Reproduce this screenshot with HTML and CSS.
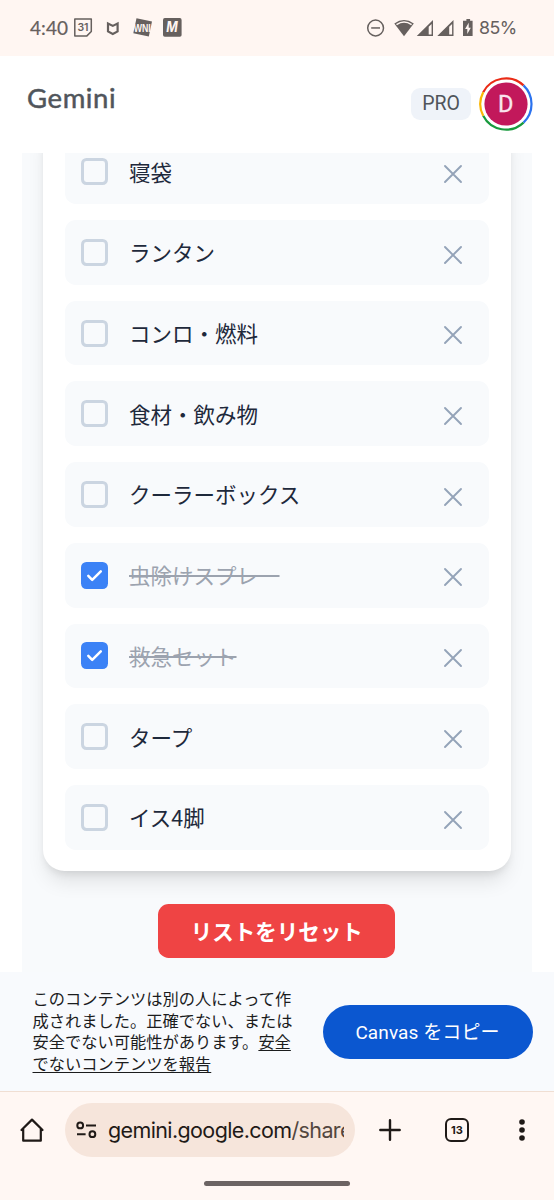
FILE: index.html
```
<!DOCTYPE html>
<html lang="ja">
<head>
<meta charset="utf-8">
<meta name="viewport" content="width=device-width">
<title>Gemini</title>
<link rel="stylesheet" href="styles.css">
</head>
<body>
<div class="status">
  <span class="clock">4:40</span>
  <svg class="status-left" width="112" height="24" viewBox="0 0 112 24" fill="#66605e">
    <path d="M1.8 1.9h16.5v12.6l-4.4 4.4H1.8z" fill="none" stroke="#66605e" stroke-width="1.5" stroke-linejoin="round"/>
    <text x="10" y="14.3" class="cal" text-anchor="middle">31</text>
    <path d="M35 6.6v7.8l4.8 2.5 4.8-2.5V6.6l-4.8 2.3z" fill="none" stroke="#66605e" stroke-width="2.2"/>
    <path d="M63.5 1.2 79 4.6 75.8 19.6 60.3 16.2z"/>
    <text x="69.3" y="15" class="news" text-anchor="middle" textLength="17" lengthAdjust="spacingAndGlyphs">WNI</text>
    <rect x="90" y="1.1" width="18.6" height="18.6" rx="1.8"/>
    <text x="99" y="15" class="mark" text-anchor="middle" textLength="11.5" lengthAdjust="spacingAndGlyphs">M</text>
  </svg>
  <svg class="status-right" width="110" height="24" viewBox="0 0 110 24" fill="#66605e">
    <circle cx="9.6" cy="12" r="7.9" fill="none" stroke="#66605e" stroke-width="1.5"/>
    <path d="M5.2 11.2h8.8v1.5H5.2z"/>
    <path d="M28.3 7.4Q38 0.5 47.8 7.4L38 20.2z"/>
    <path d="M30.5 8.6Q38 3.4 45.6 8.6" fill="none" stroke="#fff6f2" stroke-width="1.5"/>
    <path d="M50.8 20 67 4v16zM71.3 20 87.5 4v16z"/>
    <path d="M62.7 10.8 65.6 8v10.6h-2.9zM83.2 10.8 86.1 8v10.6h-2.9z" fill="#fff6f2"/>
    <path d="M98 4.7h2.4V3h3.7v1.7h2.5v15.4H97V4.7z"/>
    <path d="m102.7 6.8-3.6 6.2h2.2v5l3.5-6.3h-2.1z" fill="#fff6f2"/>
  </svg>
  <span class="battery">85%</span>
</div>

<header class="header">
  <span class="brand">Gemini</span>
  <span class="plan">PRO</span>
  <svg class="avatar" width="54" height="54" viewBox="0 0 54 54" fill="none" stroke-width="2.2">
    <path d="M4.2 15.2A25.6 25.6 0 0 1 44.5 8.4" stroke="#ea2b16"/>
    <path d="M44.5 8.4A25.6 25.6 0 0 1 44.5 45.6" stroke="#2b72ee"/>
    <path d="M44.5 45.6A25.6 25.6 0 0 1 4.2 38.8" stroke="#189a3d"/>
    <path d="M4.2 38.8A25.6 25.6 0 0 1 4.2 15.2" stroke="#fbb605"/>
    <circle cx="27" cy="27" r="21.6" fill="#c2185b"/>
    <text x="26.7" y="35.4" text-anchor="middle" class="initial">D</text>
  </svg>
</header>

<main class="canvas">
  <ul class="card">
    <li class="item"><i class="box"></i><span>寝袋</span><svg class="x" viewBox="0 0 20 20"><path d="m2 2 16 16M18 2 2 18"/></svg></li>
    <li class="item"><i class="box"></i><span>ランタン</span><svg class="x" viewBox="0 0 20 20"><path d="m2 2 16 16M18 2 2 18"/></svg></li>
    <li class="item"><i class="box"></i><span>コンロ・燃料</span><svg class="x" viewBox="0 0 20 20"><path d="m2 2 16 16M18 2 2 18"/></svg></li>
    <li class="item"><i class="box"></i><span>食材・飲み物</span><svg class="x" viewBox="0 0 20 20"><path d="m2 2 16 16M18 2 2 18"/></svg></li>
    <li class="item"><i class="box"></i><span>クーラーボックス</span><svg class="x" viewBox="0 0 20 20"><path d="m2 2 16 16M18 2 2 18"/></svg></li>
    <li class="item done"><i class="box"><svg viewBox="0 0 27 27"><path d="m7.3 13.8 3.9 4.1 8.6-8.6"/></svg></i><span>虫除けスプレー</span><svg class="x" viewBox="0 0 20 20"><path d="m2 2 16 16M18 2 2 18"/></svg></li>
    <li class="item done"><i class="box"><svg viewBox="0 0 27 27"><path d="m7.3 13.8 3.9 4.1 8.6-8.6"/></svg></i><span>救急セット</span><svg class="x" viewBox="0 0 20 20"><path d="m2 2 16 16M18 2 2 18"/></svg></li>
    <li class="item"><i class="box"></i><span>タープ</span><svg class="x" viewBox="0 0 20 20"><path d="m2 2 16 16M18 2 2 18"/></svg></li>
    <li class="item"><i class="box"></i><span>イス4脚</span><svg class="x" viewBox="0 0 20 20"><path d="m2 2 16 16M18 2 2 18"/></svg></li>
  </ul>
  <button class="reset">リストをリセット</button>
</main>

<section class="notice">
  <p>このコンテンツは別の人によって作<br>成されました。正確でない、または<br>安全でない可能性があります。<u>安全<br>でないコンテンツを報告</u></p>
  <button class="copy">Canvas をコピー</button>
</section>

<nav class="browser">
  <div class="tools">
    <svg class="home" width="26" height="26" viewBox="0 0 26 26"><path d="M2.5 13 13 2.6 23.5 13M4.2 11.5v12.2h17.6V11.5" fill="none" stroke="#1f1a17" stroke-width="2.2" stroke-linejoin="round" stroke-linecap="round"/></svg>
    <div class="address">
      <svg width="22" height="20" viewBox="0 0 22 20" fill="none" stroke="#1f1a17" stroke-width="2"><circle cx="4.2" cy="5.4" r="2.9"/><path d="M10 5.4h10M1 14.2h8.6"/><circle cx="16.4" cy="14.2" r="2.9"/></svg>
      <span class="url">gemini.google.com<span class="path">/share</span></span>
    </div>
    <svg class="plus" width="22" height="22" viewBox="0 0 22 22"><path d="M11 1.3v19.4M1.3 11h19.4" stroke="#1f1a17" stroke-width="2.4" stroke-linecap="round"/></svg>
    <span class="tabs">13</span>
    <svg class="more" width="6" height="22" viewBox="0 0 6 22" fill="#1f1a17"><circle cx="3" cy="3" r="2.8"/><circle cx="3" cy="11" r="2.8"/><circle cx="3" cy="19" r="2.8"/></svg>
  </div>
  <div class="handle"></div>
</nav>
</body>
</html>
```
FILE: styles.css
```
* { box-sizing: border-box; }
body {
  margin: 0;
  width: 554px;
  height: 1200px;
  overflow: hidden;
  display: flex;
  flex-direction: column;
  background: #fff;
  font-family: "Noto Sans", "Noto Sans CJK JP", sans-serif;
}
button { border: 0; padding: 0; color: #fff; white-space: nowrap; }

.status {
  height: 56px;
  flex: none;
  display: flex;
  align-items: center;
  padding-left: 30px;
  background: #fff6f2;
  color: #66605e;
  font: 19px/24px Lato, sans-serif;
}
.clock { width: 43px; letter-spacing: 0.1px; -webkit-text-stroke: 0.2px #66605e; }
.status-left { margin-top: 1px; }
.status-right { margin-left: 181px; margin-top: -1px; }
.battery { margin-left: 3px; font-family: Inter, sans-serif; font-size: 17.8px; letter-spacing: -0.5px; }
.cal { font: 600 10.5px Inter, sans-serif; }
.news { font: 700 10px "Liberation Sans", sans-serif; fill: #fff6f2; }
.mark { font: italic 700 14px Inter, sans-serif; fill: #fff6f2; }

.header { height: 97px; flex: none; display: flex; padding-left: 27px; color: #50555b; }
.brand { width: 384px; padding-top: 25px; font: 27.5px/34px Lato, sans-serif; letter-spacing: 0.6px; -webkit-text-stroke: 0.5px #50555b; }
.plan {
  width: 60px;
  height: 32px;
  margin-top: 32px;
  border-radius: 9px;
  background: #eff3f9;
  text-align: center;
  font: 400 19.5px/32px Roboto, sans-serif;
}
.avatar { margin: 21px 0 0 7.5px; }
.initial { font: 400 23.5px Roboto, sans-serif; fill: #f9e5ee; stroke: #f9e5ee; stroke-width: 0.3px; }

.canvas {
  height: 819px;
  flex: none;
  margin: 0 22px;
  padding: 0 21.5px 14.5px 21px;
  overflow: hidden;
  background: #f8fafc;
  display: flex;
  flex-direction: column;
  justify-content: flex-end;
  align-items: center;
}
.card {
  width: 100%;
  flex: none;
  margin: 0 0 32.5px;
  padding: 21.5px;
  list-style: none;
  display: grid;
  gap: 16.2px;
  border-radius: 21.5px;
  background: #fff;
  box-shadow: 0 13.5px 20px -4px rgb(0 0 0 / 10%), 0 5px 8px -3px rgb(0 0 0 / 10%);
}
.item {
  height: 64.55px;
  padding: 0 26.5px 0 16px;
  border-radius: 10.7px;
  background: #f8fafc;
  color: #1e293b;
  display: flex;
  align-items: center;
  font: 21.5px/32px "Noto Sans CJK JP", sans-serif;
}
.item span { margin-left: 21.5px; flex: 1; }
.box { width: 27px; height: 27px; border: 3px solid #cbd5e1; border-radius: 5.4px; }
.x { width: 20px; height: 20px; margin-top: 4.5px; fill: none; stroke: #94a3b8; stroke-width: 1.9; stroke-linecap: round; }
.done { color: #9ca3af; }
.done span { flex: none; text-decoration: line-through; text-decoration-thickness: 2px; }
.done .x { margin-left: auto; }
.done .box { border: 0; background: #3b82f6; }
.box svg { display: block; width: 27px; height: 27px; fill: none; stroke: #fff; stroke-width: 2.5; stroke-linecap: round; stroke-linejoin: round; }
.reset {
  width: 237px;
  height: 53.8px;
  flex: none;
  border-radius: 10.7px;
  background: #ef4444;
  font: 700 21.5px/54px "Noto Sans CJK JP", sans-serif;
}

.notice { height: 119px; flex: none; display: flex; padding-left: 32.5px; background: #f8fafd; }
.notice p {
  width: 290px;
  margin: 16px 0 0;
  color: #1b1c1d;
  font: 16.25px/21.5px "Noto Sans CJK JP", sans-serif;
  white-space: nowrap;
}
.notice u { text-underline-offset: 2px; text-decoration-thickness: 1.3px; }
.copy {
  width: 210px;
  height: 54px;
  margin-top: 33px;
  border-radius: 27px;
  background: #0b57d0;
  font: 400 19px/56px Roboto, "Noto Sans CJK JP", sans-serif;
  letter-spacing: 0.1px;
}

.browser { height: 109px; flex: none; border-top: 1px solid #f0dfd3; background: #fff7f3; }
.tools { height: 54px; margin-top: 11px; display: flex; align-items: center; }
.home { margin-left: 19px; }
.address {
  width: 290px;
  height: 54px;
  margin-left: 20px;
  padding: 0 11px 0 11px;
  border-radius: 27px;
  background: #f6e5db;
  display: flex;
  align-items: center;
}
.address svg { flex: none; }
.url { margin-left: 10px; overflow: hidden; color: #1f1a17; font: 21.5px/30px Inter, sans-serif; letter-spacing: -0.62px; white-space: nowrap; }
.path { color: #53463e; }
.plus { margin-left: 24px; }
.tabs {
  width: 24px;
  height: 24px;
  margin-left: 44px;
  border: 2.5px solid #1f1a17;
  border-radius: 6px;
  color: #1f1a17;
  text-align: center;
  font: 700 11px/20px Inter, sans-serif;
}
.more { margin-left: 50px; }
.handle { width: 146px; height: 5px; margin: 24px 0 0 204px; border-radius: 3px; background: #6c6463; }
```
